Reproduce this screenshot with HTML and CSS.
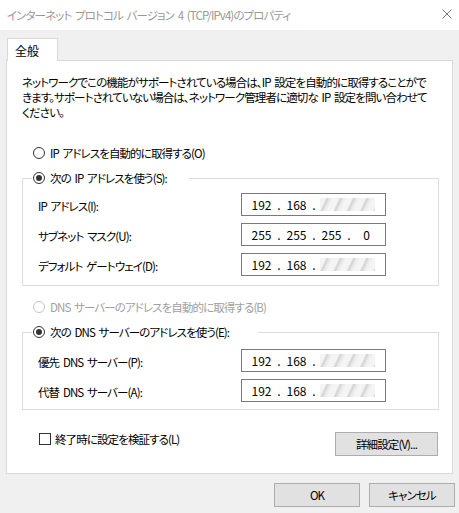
FILE: index.html
```html
<!DOCTYPE html>
<html lang="ja">
<head>
  <meta charset="UTF-8" />
  <title>インターネット プロトコル バージョン 4 (TCP/IPv4)のプロパティ</title>
  <link rel="stylesheet" href="styles.css">
</head>
<body>
  <div class="titlebar">
    <span>インターネット プロトコル バージョン 4 (TCP/IPv4)のプロパティ</span>
    <svg class="close" width="10" height="10" viewBox="0 0 10 10"><path d="M0.5 0.5 L9.5 9.5 M9.5 0.5 L0.5 9.5" stroke="#777" stroke-width="1" fill="none"/></svg>
  </div>

  <div class="tabs">
    <div class="tab">全般</div>
  </div>

  <div class="panel">
    <p class="intro">ネットワークでこの機能がサポートされている場合は、IP 設定を自動的に取得することがで<br>きます。サポートされていない場合は、ネットワーク管理者に適切な IP 設定を問い合わせて<br>ください。</p>

    <div class="radio-row first">
      <span class="radio"></span>
      <span>IP アドレスを自動的に取得する(O)</span>
    </div>

    <div class="group group-ip">
      <div class="group-head head-ip">
        <span class="radio checked"></span>
        <span>次の IP アドレスを使う(S):</span>
      </div>
      <div class="fields">
        <label>IP アドレス(I):</label>
        <div class="ipbox"><span class="oct">192</span><span class="dot">.</span><span class="oct">168</span><span class="dot">.</span><span class="blur"></span></div>
        <label>サブネット マスク(U):</label>
        <div class="ipbox"><span class="oct">255</span><span class="dot">.</span><span class="oct">255</span><span class="dot">.</span><span class="oct">255</span><span class="dot">.</span><span class="oct">0</span></div>
        <label>デフォルト ゲートウェイ(D):</label>
        <div class="ipbox"><span class="oct">192</span><span class="dot">.</span><span class="oct">168</span><span class="dot">.</span><span class="blur"></span></div>
      </div>
    </div>

    <div class="radio-row disabled">
      <span class="radio"></span>
      <span>DNS サーバーのアドレスを自動的に取得する(B)</span>
    </div>

    <div class="group group-dns">
      <div class="group-head head-dns">
        <span class="radio checked"></span>
        <span>次の DNS サーバーのアドレスを使う(E):</span>
      </div>
      <div class="fields">
        <label>優先 DNS サーバー(P):</label>
        <div class="ipbox"><span class="oct">192</span><span class="dot">.</span><span class="oct">168</span><span class="dot">.</span><span class="blur"></span></div>
        <label>代替 DNS サーバー(A):</label>
        <div class="ipbox"><span class="oct">192</span><span class="dot">.</span><span class="oct">168</span><span class="dot">.</span><span class="blur"></span></div>
      </div>
    </div>

    <div class="bottom-row">
      <div class="check-row">
        <span class="checkbox"></span>
        <span>終了時に設定を検証する(L)</span>
      </div>
      <button class="btn btn-detail">詳細設定(V)...</button>
    </div>
  </div>

  <div class="actions">
    <button class="btn">OK</button>
    <button class="btn">キャンセル</button>
  </div>
</body>
</html>
```

FILE: styles.css
```css
* { margin: 0; padding: 0; box-sizing: border-box; }
body { width: 459px; height: 513px; overflow: hidden; background: #f0f0f0; color: #000; font-family: "Noto Sans CJK JP", "Noto Sans", sans-serif; font-size: 11.5px; letter-spacing: -0.9px; word-spacing: 2px; line-height: 16px; font-feature-settings: "palt"; }

.titlebar { height: 30px; background: #fff; color: #999; display: flex; align-items: center; justify-content: space-between; padding: 0 7px 0 7px; }
.close { display: block; margin-top: -2px; }

.tabs { display: flex; padding: 8px 0 0 7px; }
.tab { width: 51px; height: 23px; margin-bottom: -1px; padding: 4px 0 0 7px; background: #fff; border: 1px solid #d9d9d9; border-bottom: none; position: relative; z-index: 1; font-size: 12px; letter-spacing: 0; }

.panel { height: 414px; margin: 0 6px; background: #fff; border: 1px solid #d9d9d9; padding: 14px 13px 0 15px; }
.intro { line-height: 15px; white-space: nowrap; }

.radio-row { display: flex; align-items: center; gap: 5px; height: 16px; padding-left: 11px; white-space: nowrap; }
.radio-row.first { margin-top: 25px; }
.radio-row.disabled { margin-top: 13px; color: #a0a0a0; }
.radio { width: 12px; height: 12px; border: 1px solid #333; border-radius: 50%; display: flex; align-items: center; justify-content: center; flex: none; }
.radio.checked::after { content: ""; width: 6px; height: 6px; border-radius: 50%; background: #333; }
.disabled .radio { border-color: #c4c4c4; }

.group { border: 1px solid #dcdcdc; margin-top: 17px; padding: 0 0 9px 15px; }
.group-dns { padding-bottom: 7px; }
.group-head { display: flex; align-items: center; gap: 5px; height: 16px; margin: -9px 0 0 -6px; padding-left: 1px; background: #fff; white-space: nowrap; }
.head-ip { width: 157px; }
.head-dns { width: 226px; }

.fields { display: grid; grid-template-columns: 203px 145px; row-gap: 7px; align-items: center; padding-top: 7px; }
.group-dns .fields { padding-top: 9px; }
.fields label { padding-top: 3px; white-space: nowrap; }
.ipbox { height: 23px; border: 1px solid #7a7a7a; display: flex; align-items: center; padding-left: 6px; font-size: 12px; letter-spacing: 0; word-spacing: 0; }
.oct { width: 27px; text-align: center; }
.dot { width: 8px; text-align: center; }
.blur { width: 55px; height: 13px; margin-left: 2px; background: repeating-linear-gradient(115deg, #f4f4f4 0, #f4f4f4 5px, #d2d2d2 7px, #e8e8e8 9px, #f4f4f4 12px); }

.bottom-row { display: flex; justify-content: space-between; align-items: flex-start; margin-top: 21px; padding: 0 1px 0 17px; }
.check-row { display: flex; align-items: center; gap: 4px; height: 16px; }
.checkbox { width: 12px; height: 12px; border: 1px solid #333; background: #fff; }
.btn { height: 24px; background: #e1e1e1; border: 1px solid #adadad; font: inherit; letter-spacing: inherit; color: #000; }
.btn-detail { width: 103px; margin-top: 1px; }

.actions { display: flex; justify-content: flex-end; gap: 9px; padding: 9px 4px 0 0; }
.actions .btn { width: 86px; }
```
